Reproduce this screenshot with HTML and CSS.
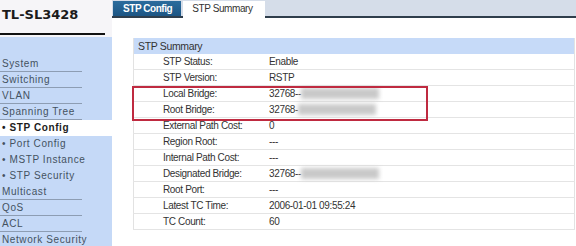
FILE: index.html
```html
<!DOCTYPE html>
<html lang="en">
  <head>
    <meta charset="UTF-8" />
    <title>TL-SL3428 - STP Summary</title>
    <link rel="stylesheet" href="styles.css">
  </head>
  <body>
    <div class="page">
      <div class="sidebar">
        <div class="logo">TL-SL3428</div>
        <div class="logo-line"></div>
        <ul class="menu">
          <li class="item">System</li>
          <li class="item">Switching</li>
          <li class="item">VLAN</li>
          <li class="item">Spanning Tree</li>
          <li class="sub active">&bull; STP Config</li>
          <li class="sub">&bull; Port Config</li>
          <li class="sub">&bull; MSTP Instance</li>
          <li class="sub">&bull; STP Security</li>
          <li class="item">Multicast</li>
          <li class="item">QoS</li>
          <li class="item">ACL</li>
          <li class="item">Network Security</li>
        </ul>
      </div>

      <div class="main">
        <div class="tabbar">
          <div class="tab">STP Config</div>
          <div class="tab current">STP Summary</div>
        </div>

        <div class="panel">
          <table class="summary">
            <tr class="head"><td colspan="2">STP Summary</td></tr>
            <tr><td class="label">STP Status:</td><td>Enable</td></tr>
            <tr><td class="label">STP Version:</td><td>RSTP</td></tr>
            <tr><td class="label">Local Bridge:</td><td>32768--<span class="blur"></span></td></tr>
            <tr><td class="label">Root Bridge:</td><td>32768-<span class="blur"></span></td></tr>
            <tr><td class="label">External Path Cost:</td><td>0</td></tr>
            <tr><td class="label">Region Root:</td><td>---</td></tr>
            <tr><td class="label">Internal Path Cost:</td><td>---</td></tr>
            <tr><td class="label">Designated Bridge:</td><td>32768--<span class="blur"></span></td></tr>
            <tr><td class="label">Root Port:</td><td>---</td></tr>
            <tr><td class="label">Latest TC Time:</td><td>2006-01-01 09:55:24</td></tr>
            <tr><td class="label">TC Count:</td><td>60</td></tr>
          </table>
          <div class="mark"></div>
        </div>
      </div>
    </div>
  </body>
</html>
```

FILE: styles.css
```css
body {
  margin: 0;
  font-family: 'Liberation Sans', Arial, sans-serif;
  background-color: #fff;
  color: #333;
}
.page {
  display: grid;
  grid-template-columns: 112px 1fr;
  width: 576px;
  height: 246px;
  overflow: hidden;
}
.sidebar {
  display: flex;
  flex-direction: column;
  background-color: #f6f5f8;
}
.logo {
  height: 33px;
  line-height: 30px;
  padding-left: 2px;
  font-family: 'DejaVu Sans', Verdana, sans-serif;
  font-weight: bold;
  font-size: 13px;
  color: #1b1b1b;
}
.logo-line {
  width: 105px;
  height: 2px;
  background-color: #111;
  margin-bottom: 2px;
}
.menu {
  flex: 1;
  list-style: none;
  margin: 0;
  padding: 19px 0 0 0;
  background-color: #c5d9f7;
}
.menu li {
  height: 15px;
  line-height: 15px;
  font-size: 10px;
  letter-spacing: 0.6px;
  color: #44525f;
  padding-left: 2px;
  white-space: nowrap;
}
.menu .item {
  width: 80px;
  border-bottom: 1px solid #8d9db3;
}
.menu .sub {
  border-bottom: 1px solid transparent;
}
.menu .active {
  background-color: #fff;
  font-weight: bold;
  color: #1c1c1c;
}
.tabbar {
  display: flex;
  align-items: flex-end;
  height: 16px;
  padding: 0 0 0 1px;
  background-color: #d5dde9;
  border-bottom: 2px solid #2f3e4c;
}
.tab {
  height: 15px;
  line-height: 15px;
  padding: 0 9px 0 10px;
  margin-right: 2px;
  font-size: 10px;
  font-weight: bold;
  letter-spacing: -0.45px;
  color: #fff;
  background: linear-gradient(#2b6c9d, #1c5584);
}
.tab.current {
  height: 17px;
  margin-bottom: -2px;
  padding: 0 12px 0 9px;
  font-weight: normal;
  letter-spacing: -0.4px;
  color: #333;
  background: #fff;
}
.panel {
  position: relative;
  margin: 20px 1px 0 21px;
}
.summary {
  width: 100%;
  border-collapse: collapse;
  font-size: 10px;
  letter-spacing: -0.35px;
  border: 1px solid #e2e2e2;
  border-top: none;
}
.summary td {
  height: 15px;
  padding: 0;
  border-bottom: 1px solid #e4e4e4;
  white-space: nowrap;
}
.summary .head td {
  height: 16px;
  padding-left: 4px;
  font-size: 10.5px;
  background-color: #c6daf8;
  border-bottom: none;
}
.summary .label {
  width: 106px;
  padding-left: 29px;
}
.blur {
  display: inline-block;
  width: 78px;
  height: 11px;
  vertical-align: middle;
  background-color: #c9c9c9;
  filter: blur(2px);
}
.mark {
  position: absolute;
  left: -1px;
  top: 48px;
  width: 292px;
  height: 31px;
  border: 2px solid #bf2a40;
}
```
